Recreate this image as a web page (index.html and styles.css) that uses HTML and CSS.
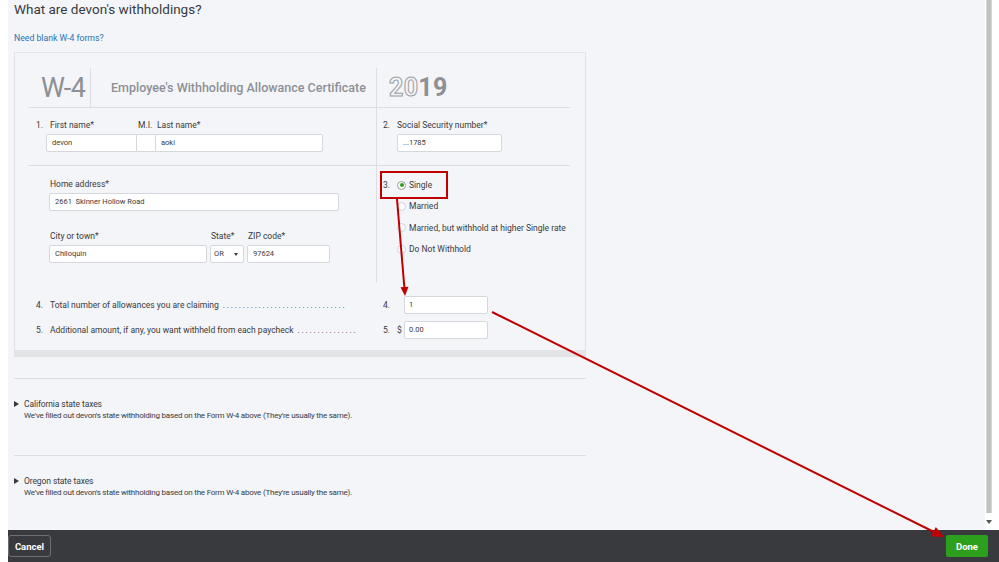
FILE: index.html
```html
<!DOCTYPE html>
<html>
<head>
<meta charset="utf-8">
<link rel="stylesheet" href="styles.css">
</head>
<body>
<div class="page">
  <div class="top">
    <div class="main">
      <h1 class="title">What are devon's withholdings?</h1>
      <div class="link">Need blank W-4 forms?</div>
      <div class="w4">
        <div class="grid">
          <div class="cell head-left">
            <div class="w4-mark">W-4</div>
            <div class="w4-title">Employee's Withholding Allowance Certificate</div>
          </div>
          <div class="cell col-right head-right">
            <span class="year"><span class="outline">20</span>19</span>
          </div>

          <div class="cell row1 left-pad">
            <span class="num">1.</span>
            <div class="field f-first">
              <div class="label">First name*</div>
              <div class="input in-first">devon</div>
            </div>
            <div class="field f-mi">
              <div class="label lbl-mi">M.I.</div>
              <div class="input in-mi"></div>
            </div>
            <div class="field f-last">
              <div class="label lbl-last">Last name*</div>
              <div class="input in-last">aoki</div>
            </div>
          </div>
          <div class="cell col-right row1 right-pad">
            <span class="num num-r">2.</span>
            <div class="field f-ssn">
              <div class="label lbl-ssn">Social Security number*</div>
              <div class="input">...1785</div>
            </div>
          </div>

          <div class="cell row2 addr">
            <div class="field f-addr">
              <div class="label">Home address*</div>
              <div class="input">2661&nbsp; Skinner Hollow Road</div>
            </div>
            <div class="city-row">
              <div class="field f-city">
                <div class="label">City or town*</div>
                <div class="input">Chiloquin</div>
              </div>
              <div class="field f-state">
                <div class="label">State*</div>
                <div class="input select">OR<span class="caret"></span></div>
              </div>
              <div class="field f-zip">
                <div class="label">ZIP code*</div>
                <div class="input">97624</div>
              </div>
            </div>
          </div>
          <div class="cell col-right row2 right-pad status">
            <span class="num num-r status-num">3.</span>
            <div class="options">
              <div class="option"><span class="radio on"></span>Single</div>
              <div class="option"><span class="radio"></span>Married</div>
              <div class="option"><span class="radio"></span>Married, but withhold at higher Single rate</div>
              <div class="option"><span class="radio"></span>Do Not Withhold</div>
            </div>
          </div>
        </div>

        <div class="lines">
          <div class="line-row">
            <div class="line-left">
              <span class="num">4.</span>
              <span class="line-text">Total number of allowances you are claiming</span>
              <span class="dots">...............................</span>
            </div>
            <div class="line-right">
              <span class="num-r2">4.</span>
              <span class="dollar"></span>
              <div class="input in-small">1</div>
            </div>
          </div>
          <div class="line-row">
            <div class="line-left">
              <span class="num">5.</span>
              <span class="line-text">Additional amount, if any, you want withheld from each paycheck</span>
              <span class="dots">...............</span>
            </div>
            <div class="line-right">
              <span class="num-r2">5.</span>
              <span class="dollar">$</span>
              <div class="input in-small">0.00</div>
            </div>
          </div>
        </div>
      </div>

      <div class="sections">
        <div class="section">
          <div class="sec-title"><span class="tri"></span>California state taxes</div>
          <div class="sec-desc">We've filled out devon's state withholding based on the Form W-4 above (They're usually the same).</div>
        </div>
        <div class="section">
          <div class="sec-title"><span class="tri"></span>Oregon state taxes</div>
          <div class="sec-desc">We've filled out devon's state withholding based on the Form W-4 above (They're usually the same).</div>
        </div>
      </div>
    </div>
    <div class="scrollbar">
      <div class="thumb"></div>
      <div class="scroll-arrow"></div>
    </div>
  </div>
  <div class="footer">
    <button class="btn cancel">Cancel</button>
    <button class="btn done">Done</button>
  </div>

  <svg class="annot" width="999" height="562" viewBox="0 0 999 562">
    <rect x="381" y="172" width="66" height="26" fill="none" stroke="#c00000" stroke-width="2"/>
    <line x1="397" y1="199" x2="404.4" y2="288" stroke="#c00000" stroke-width="2"/>
    <polygon points="405,296 408.5,286.7 400.5,287.3" fill="#c00000"/>
    <line x1="492" y1="312" x2="934" y2="532" stroke="#c00000" stroke-width="2"/>
    <polygon points="944,537 931,536.5 935.8,527" fill="#c00000"/>
  </svg>
</div>
</body>
</html>
```
FILE: styles.css
```css
* { box-sizing: border-box; }
html, body { margin: 0; padding: 0; background: #ffffff; }
body { font-family: Roboto, "Liberation Sans", sans-serif; color: #393a3d; }

.page { width: 999px; height: 562px; position: relative; overflow: hidden; }
.top { display: flex; height: 530px; }
.main {
  margin-left: 8px;
  width: 977px;
  height: 530px;
  background: #f4f5f8;
  padding-left: 6px;
  overflow: hidden;
}
.title { margin: 0; font-size: 13.5px; font-weight: 400; line-height: 18px; color: #393a3d; }
.link { margin-top: 14px; font-size: 8.7px; line-height: 12px; color: #1e73b8; }

.w4 {
  margin-top: 8px;
  width: 572px;
  border: 1px solid #e1e3e6;
  border-bottom: 7px solid #e3e4e6;
  padding: 15px 15px 11px 13px;
}
.grid { display: grid; grid-template-columns: 348px 194px; }
.cell { display: flex; }
.col-right { border-left: 1px solid #dcdee2; }

.head-left, .head-right { height: 40px; border-bottom: 1px solid #dcdee2; align-items: center; }
.w4-mark {
  width: 63px; height: 100%; border-right: 1px solid #dcdee2;
  padding-left: 13px; display: flex; align-items: center;
  font-size: 27px; color: #8d9096; letter-spacing: -0.5px;
}
.w4-title { padding-left: 20px; font-size: 12.5px; font-weight: 500; color: #8d9096; }
.head-right { padding-left: 12px; }
.year { font-size: 25px; font-weight: 700; color: #8d9096; letter-spacing: 0.3px; }
.outline { color: #f4f5f8; -webkit-text-stroke: 1px #9a9da2; }

.row1 { height: 58px; border-bottom: 1px solid #dcdee2; padding-top: 11px; }
.left-pad { padding-left: 8px; }
.right-pad { padding-left: 6px; }
.num { width: 10px; font-size: 8.5px; line-height: 12px; }
.num-r { width: 14px; }
.field { display: flex; flex-direction: column; }
.label { font-size: 8.5px; line-height: 12px; height: 12px; margin-bottom: 3px; white-space: nowrap; }
.input {
  height: 18px; background: #ffffff; border: 1px solid #d4d7dc; border-radius: 2px;
  font-size: 7.5px; line-height: 16px; padding-left: 5px; color: #393a3d; white-space: nowrap;
}
.f-first { width: 91px; }
.f-first .label { padding-left: 4px; }
.in-first { border-radius: 2px 0 0 2px; }
.f-mi { width: 18px; }
.lbl-mi { padding-left: 1px; overflow: visible; }
.in-mi { border-left: none; border-right: none; border-radius: 0; }
.f-last { width: 168px; }
.lbl-last { padding-left: 2px; }
.in-last { border-radius: 0 2px 2px 0; }
.f-ssn { width: 105px; }

.row2 { height: 117px; }
.addr { flex-direction: column; padding: 12px 0 0 21px; }
.addr .label { padding-left: 1px; }
.f-addr { width: 290px; }
.city-row { display: flex; gap: 3px; margin-top: 19px; }
.f-city { width: 158px; }
.f-state { width: 34px; }
.f-zip { width: 83px; }
.select { position: relative; padding-left: 3px; }
.caret {
  position: absolute; right: 5px; top: 7px;
  border-left: 2.5px solid transparent; border-right: 2.5px solid transparent; border-top: 3px solid #393a3d;
}

.status { padding-top: 13px; }
.status-num { line-height: 12px; }
.options { display: flex; flex-direction: column; margin-top: -4.5px; }
.option { display: flex; align-items: center; height: 21.3px; font-size: 8.5px; white-space: nowrap; }
.radio {
  width: 9px; height: 9px; border-radius: 50%; background: #ffffff;
  border: 1px solid #cfd2d6; margin-right: 3px; position: relative; flex: none;
}
.radio.on { border-color: #9a9da2; }
.radio.on::after {
  content: ""; position: absolute; left: 1.5px; top: 1.5px; width: 4px; height: 4px;
  border-radius: 50%; background: #2ca01c;
}

.lines { display: flex; flex-direction: column; gap: 7px; margin-top: 13px; }
.line-row { display: flex; align-items: center; height: 18px; }
.line-left { width: 348px; display: flex; align-items: center; padding-left: 8px; font-size: 8.5px; white-space: nowrap; }
.line-left .num { width: 14px; }
.dots { margin-left: 4px; letter-spacing: 1.75px; }
.line-right { display: flex; align-items: center; padding-left: 7px; font-size: 8.5px; }
.num-r2 { width: 14px; }
.dollar { width: 7px; }
.in-small { width: 84px; padding-left: 4px; }

.sections { margin-top: 21px; }
.section {
  width: 572px;
  border-top: 1px solid #dcdee2;
  padding: 19px 0 33px 0;
}
.sec-title { display: flex; align-items: center; font-size: 8.5px; line-height: 12px; color: #393a3d; letter-spacing: -0.1px; }
.tri {
  width: 0; height: 0; margin-right: 5px;
  border-top: 3px solid transparent; border-bottom: 3px solid transparent; border-left: 5px solid #393a3d;
}
.sec-desc { padding-left: 10px; font-size: 8px; line-height: 12px; color: #393a3d; letter-spacing: -0.22px; }

.scrollbar { width: 14px; height: 530px; background: #ffffff; position: relative; }
.thumb { margin-left: 1px; width: 6px; height: 513px; background: #c1c1c1; border-left: 1px solid #d6d6d6; border-right: 1px solid #d6d6d6; }
.scroll-arrow {
  position: absolute; left: 1px; top: 520px;
  border-left: 3px solid transparent; border-right: 3px solid transparent; border-top: 4px solid #555555;
}

.footer {
  margin-left: 8px; height: 32px; background: #393a3d;
  display: flex; justify-content: space-between; align-items: center; padding-right: 11px;
}
.btn { font-family: Roboto, "Liberation Sans", sans-serif; font-size: 9.5px; font-weight: 700; color: #ffffff; height: 22px; padding: 0; cursor: pointer; }
.cancel { width: 43px; background: #393a3d; border: 1px solid #6e6f74; border-radius: 3px; }
.done { width: 42px; background: #2ca01c; border: none; border-radius: 2px; }

.annot { position: absolute; left: 0; top: 0; pointer-events: none; }
```
